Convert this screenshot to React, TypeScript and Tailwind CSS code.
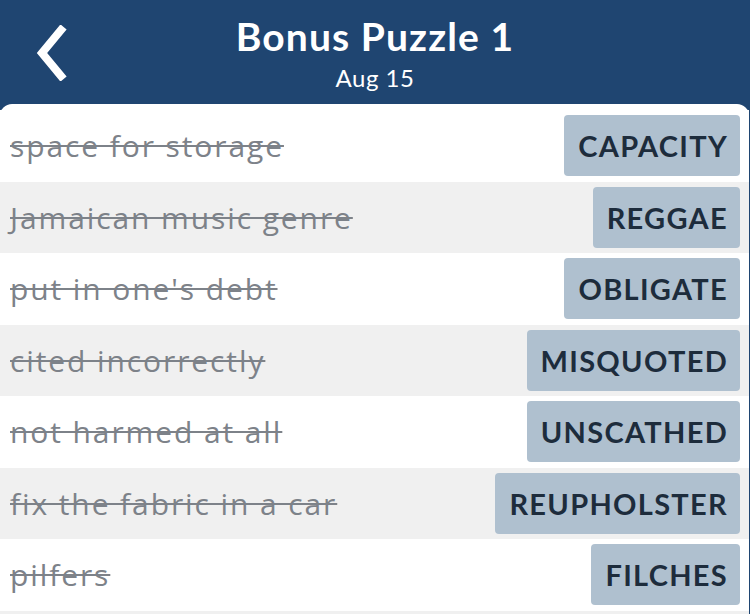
import React from "react";

const rows = [
  ["space for storage", "CAPACITY"],
  ["Jamaican music genre", "REGGAE"],
  ["put in one's debt", "OBLIGATE"],
  ["cited incorrectly", "MISQUOTED"],
  ["not harmed at all", "UNSCATHED"],
  ["fix the fabric in a car", "REUPHOLSTER"],
  ["pilfers", "FILCHES"],
];

export default function App() {
  return (
    <div
      className="w-[750px] h-[614px] overflow-hidden bg-[#1f4571]"
      style={{ fontFamily: "Lato, 'Open Sans', sans-serif" }}
    >
      <div className="relative h-[104px] flex flex-col items-center">
        <button className="absolute left-[28px] top-[24px] w-[48px] h-[58px] flex items-center justify-center">
          <svg width="40" height="56" viewBox="0 0 40 56">
            <polyline
              points="29,5 10,28 29,51"
              fill="none"
              stroke="white"
              strokeWidth="8"
              strokeLinecap="square"
            />
          </svg>
        </button>
        <div className="mt-[12px] text-white text-[39px] font-bold leading-[48px] tracking-[1.1px]">
          Bonus Puzzle 1
        </div>
        <div className="text-white text-[24px] leading-[30px] mt-[3px] tracking-[0.5px]">Aug 15</div>
      </div>
      <div className="bg-white rounded-t-[12px] w-[749px] pt-[6px] h-[510px]">
        {rows.map(([clue, ans], i) => (
          <div
            key={i}
            className={`h-[71.5px] flex items-center justify-between pl-[10px] pr-[9px] ${
              i % 2 === 1 ? "bg-[#f0f0f0]" : "bg-white"
            }`}
          >
            <span
              className="text-[30px] text-[#7d8289] line-through decoration-[#7d8289] decoration-2 tracking-[1.9px]"
              style={{ fontFamily: "'Open Sans', sans-serif" }}
            >
              {clue}
            </span>
            <span className="h-[61px] pl-[14px] pr-[12px] flex items-center rounded-[4px] bg-[#afc0cf] text-[#1d2c3c] font-bold text-[29px] tracking-[1.3px]">
              {ans}
            </span>
          </div>
        ))}
        <div className="h-[10px] bg-[#f0f0f0]" />
      </div>
    </div>
  );
}
